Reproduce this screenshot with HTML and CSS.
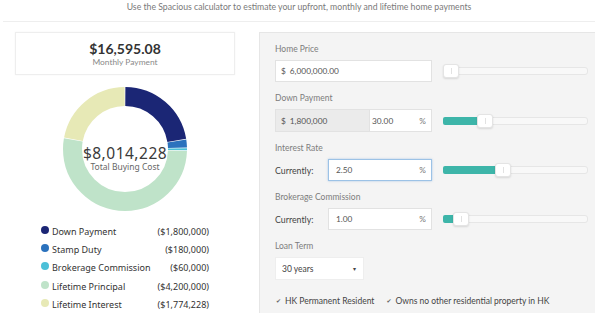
FILE: index.html
```html
<!DOCTYPE html>
<html lang="en">
  <head>
    <meta charset="UTF-8" />
    <meta name="viewport" content="width=device-width, initial-scale=1.0" />
    <title>Spacious: Mortgage Calculator</title>
    <link rel="stylesheet" href="styles.css">
  </head>
  <body>
    <header class="intro">
      <p>Use the Spacious calculator to estimate your upfront, monthly and lifetime home payments</p>
    </header>

    <main class="calc">
      <section class="summary">
        <div class="monthly">
          <div class="monthly-amount">$16,595.08</div>
          <div class="monthly-label">Monthly Payment</div>
        </div>

        <div class="donut">
          <svg class="donut-chart" width="126" height="126" viewBox="0 0 126 126">
            <g transform="rotate(-90 63 63)" fill="none" stroke-width="19">
              <circle cx="63" cy="63" r="52.5" pathLength="100" stroke="#1b2675" stroke-dasharray="22.26 77.74" stroke-dashoffset="-0.1" />
              <circle cx="63" cy="63" r="52.5" pathLength="100" stroke="#2b72bd" stroke-dasharray="2.05 97.95" stroke-dashoffset="-22.56" />
              <circle cx="63" cy="63" r="52.5" pathLength="100" stroke="#4cc0d8" stroke-dasharray="0.55 99.45" stroke-dashoffset="-24.8" />
              <circle cx="63" cy="63" r="52.5" pathLength="100" stroke="#bfe3c9" stroke-dasharray="52.21 47.79" stroke-dashoffset="-25.55" />
              <circle cx="63" cy="63" r="52.5" pathLength="100" stroke="#e7e9b6" stroke-dasharray="21.94 78.06" stroke-dashoffset="-77.96" />
            </g>
          </svg>
          <div class="donut-text">
            <div class="donut-amount">$8,014,228</div>
            <div class="donut-label">Total Buying Cost</div>
          </div>
        </div>

        <ul class="legend">
          <li><span class="dot" style="background:#1b2675"></span>Down Payment<span class="legend-value">($1,800,000)</span></li>
          <li><span class="dot" style="background:#2b72bd"></span>Stamp Duty<span class="legend-value">($180,000)</span></li>
          <li><span class="dot" style="background:#4cc0d8"></span>Brokerage Commission<span class="legend-value">($60,000)</span></li>
          <li><span class="dot" style="background:#bfe3c9"></span>Lifetime Principal<span class="legend-value">($4,200,000)</span></li>
          <li><span class="dot" style="background:#e7e9b6"></span>Lifetime Interest<span class="legend-value">($1,774,228)</span></li>
        </ul>
      </section>

      <section class="inputs">
        <div class="group">
          <label>Home Price</label>
          <div class="row">
            <div class="fields">
              <div class="box box-full"><span class="cur">$</span>6,000,000.00</div>
            </div>
            <div class="slider">
              <span class="fill" style="width:0px"></span><span class="handle"></span>
            </div>
          </div>
        </div>

        <div class="group">
          <label>Down Payment</label>
          <div class="row">
            <div class="fields">
              <div class="box box-grey"><span class="cur">$</span>1,800,000</div>
              <div class="box box-pct">30.00<span class="pct">%</span></div>
            </div>
            <div class="slider">
              <span class="fill" style="width:34px"></span><span class="handle"></span>
            </div>
          </div>
        </div>

        <div class="group">
          <label>Interest Rate</label>
          <div class="row">
            <div class="fields">
              <span class="current">Currently:</span>
              <div class="box box-rate focused">2.50<span class="pct">%</span></div>
            </div>
            <div class="slider">
              <span class="fill" style="width:52px"></span><span class="handle"></span>
            </div>
          </div>
        </div>

        <div class="group">
          <label>Brokerage Commission</label>
          <div class="row">
            <div class="fields">
              <span class="current">Currently:</span>
              <div class="box box-rate">1.00<span class="pct">%</span></div>
            </div>
            <div class="slider">
              <span class="fill" style="width:10px"></span><span class="handle"></span>
            </div>
          </div>
        </div>

        <div class="group">
          <label>Loan Term</label>
          <div class="select">30 years<span class="caret">&#9662;</span></div>
        </div>

        <div class="checks">
          <span class="check"><span class="tick">&#10004;</span>HK Permanent Resident</span>
          <span class="check"><span class="tick">&#10004;</span>Owns no other residential property in HK</span>
        </div>
      </section>
    </main>
  </body>
</html>
```

FILE: styles.css
```css
body {
  margin: 0;
  font-family: Lato, "Open Sans", sans-serif;
  color: #444;
  background-color: #fff;
  overflow: hidden;
}
.intro {
  border-bottom: 1px solid #eeeeee;
  padding-bottom: 7px;
  margin: 0 0 0 3px;
}
.intro p {
  margin: 0;
  line-height: 14px;
  font-size: 8.7px;
  color: #7a7a7a;
  text-align: center;
}
.calc {
  display: flex;
  padding-top: 10px;
}
.summary {
  width: 259px;
  flex: none;
}
.monthly {
  margin-left: 15px;
  width: 218px;
  height: 41px;
  border: 1px solid #eeeeee;
  box-shadow: 0 0 2px rgba(0, 0, 0, 0.04);
  text-align: center;
  display: flex;
  flex-direction: column;
  justify-content: center;
}
.monthly-amount {
  font-size: 14px;
  font-weight: 700;
  color: #333;
  line-height: 17px;
}
.monthly-label {
  font-size: 8.4px;
  color: #8a8a8a;
  line-height: 11px;
}
.donut {
  display: grid;
  justify-items: center;
  align-items: center;
  margin: 11px 0 0 15px;
  width: 220px;
}
.donut-chart,
.donut-text {
  grid-area: 1 / 1;
}
.donut-text {
  text-align: center;
  font-family: "Noto Sans", sans-serif;
  padding-top: 18px;
}
.donut-amount {
  font-size: 15.5px;
  color: #3a3a3a;
  line-height: 18px;
  letter-spacing: 0.5px;
}
.donut-label {
  font-size: 8.5px;
  color: #666;
  line-height: 10px;
}
.legend {
  list-style: none;
  margin: 10px 0 0 41px;
  padding: 0;
  width: 168px;
  font-family: "Noto Sans", sans-serif;
  font-size: 9px;
  color: #333;
}
.legend li {
  display: flex;
  align-items: center;
  height: 18.4px;
}
.legend li:last-child {
  height: 17px;
}
.dot {
  width: 8px;
  height: 8px;
  border-radius: 50%;
  margin-right: 3px;
  margin-top: -3px;
}
.legend-value {
  margin-left: auto;
}
.inputs {
  flex: 1;
  background-color: #f4f4f4;
  border: 1px solid #e6e6e6;
  border-right: none;
  border-bottom: none;
  padding: 10px 0 0 15px;
  height: 270px;
}
.group {
  margin-bottom: 10px;
}
.group label {
  display: block;
  font-size: 8.5px;
  line-height: 12px;
  color: #7d7d7d;
  margin-bottom: 5px;
}
.row {
  display: flex;
  align-items: center;
}
.fields {
  width: 157px;
  display: flex;
  align-items: center;
}
.box {
  height: 22px;
  box-sizing: border-box;
  background-color: #fff;
  border: 1px solid #e2e2e2;
  display: flex;
  align-items: center;
  padding: 0 5px;
  font-size: 8.3px;
  color: #555;
}
.box-full {
  width: 157px;
}
.box-grey {
  width: 95px;
  height: 23px;
  background-color: #ebebeb;
}
.box-pct {
  width: 62px;
  height: 23px;
  border-left: none;
  padding-left: 2px;
}
.cur {
  margin-right: 4px;
}
.pct {
  margin-left: auto;
  color: #777;
}
.current {
  width: 53px;
  font-size: 8.8px;
  color: #444;
}
.box-rate {
  width: 104px;
  padding-left: 7px;
}
.focused {
  border-color: #9cc2e6;
  box-shadow: 0 0 2px rgba(102, 160, 220, 0.5);
}
.slider {
  margin-left: 11px;
  width: 145px;
  height: 8px;
  box-sizing: border-box;
  background-color: #f8f8f8;
  border: 1px solid #e6e6e6;
  border-radius: 3px;
  display: flex;
  align-items: center;
}
.fill {
  height: 8px;
  background-color: #3db5a9;
  border-radius: 2px 0 0 2px;
  margin-left: -1px;
}
.handle {
  width: 16px;
  height: 14px;
  flex: none;
  box-sizing: border-box;
  background-color: #fff;
  border: 1px solid #e4e4e4;
  border-radius: 3px;
  box-shadow: 0 1px 2px rgba(0, 0, 0, 0.12);
  display: flex;
  justify-content: center;
  align-items: center;
}
.handle::after {
  content: "";
  width: 1px;
  height: 6px;
  background-color: #e2e2e2;
}
.select {
  width: 89px;
  height: 23px;
  box-sizing: border-box;
  background-color: #fff;
  border: 1px solid #eeeeee;
  display: flex;
  align-items: center;
  padding: 0 7px 0 6px;
  font-size: 8.5px;
  color: #444;
}
.caret {
  margin-left: auto;
  font-size: 6px;
}
.checks {
  display: flex;
  gap: 11px;
  margin-top: 15px;
  line-height: 12px;
  font-size: 8.5px;
  color: #444;
}
.check {
  display: flex;
  align-items: center;
}
.tick {
  font-family: "DejaVu Sans", sans-serif;
  font-size: 6px;
  color: #666;
  margin: 0 4px 0 1px;
}
```
